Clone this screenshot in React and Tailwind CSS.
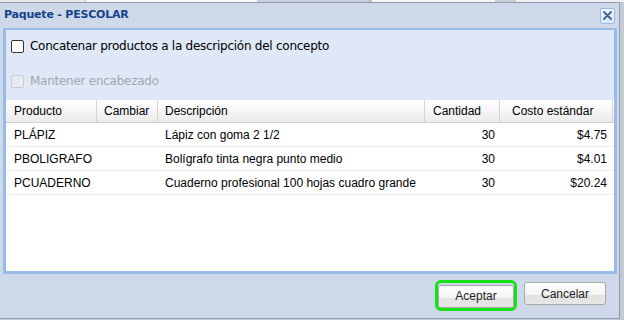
import React from "react";

const rows = [
  { producto: "PLÁPIZ", cambiar: "", descripcion: "Lápiz con goma 2 1/2", cantidad: 30, costo: "$4.75" },
  { producto: "PBOLIGRAFO", cambiar: "", descripcion: "Bolígrafo tinta negra punto medio", cantidad: 30, costo: "$4.01" },
  { producto: "PCUADERNO", cambiar: "", descripcion: "Cuaderno profesional 100 hojas cuadro grande", cantidad: 30, costo: "$20.24" },
];

// Checkbox
const Checkbox = ({ label, disabled }) => (
  <div className="flex items-center h-[22px]">
    <span
      className={
        disabled
          ? "w-[13px] h-[13px] rounded-[2px] border border-[#c8ccd2] bg-[#e6ebf3]"
          : "w-[13px] h-[13px] rounded-[2px] border border-[#333] bg-white"
      }
    />
    <span
      className={
        "ml-[6px] text-[12px] tracking-[-0.26px] font-['DejaVu_Sans',sans-serif] " +
        (disabled ? "text-[#a3a6ab]" : "text-black")
      }
    >
      {label}
    </span>
  </div>
);

// CloseButton
const CloseButton = () => (
  <div className="w-[15px] h-[16px] rounded-[2px] border border-[#99bbe8] bg-[linear-gradient(to_bottom,#f1f5fb,#dbe6f5)] flex items-center justify-center">
    <svg width="9" height="9" viewBox="0 0 9 9">
      <path d="M1 1 L8 8 M8 1 L1 8" stroke="#3d5f9b" strokeWidth="1.8" strokeLinecap="round" />
    </svg>
  </div>
);

// Button
const Button = ({ children, className = "" }) => (
  <button
    className={
      "h-[23px] rounded-[3px] border border-[#a9a9a9] bg-[linear-gradient(to_bottom,#fefefe_0%,#f4f4f4_55%,#e2e2e2_56%,#e6e6e6_100%)] text-[12px] text-[#222] font-['Liberation_Sans',sans-serif] " +
      className
    }
  >
    {children}
  </button>
);

export default function App() {
  return (
    <div className="w-[624px] h-[320px] overflow-hidden bg-[#c4cad2] font-['Liberation_Sans',sans-serif]">
      {/* page behind the dialog */}
      <div className="flex h-[2px]">
        <div className="w-[85px] bg-[#e9e9e9]" />
        <div className="w-[172px] bg-[#fbfbfb] border-l border-[#c8c8c8]" />
        <div className="w-[112px] bg-[#c9d0da]" />
        <div className="w-[126px] bg-[#f7f7f7] border-l-[3px] border-[#b8bec6]" />
        <div className="w-[21px] bg-[#c9ced6]" />
        <div className="flex-1 bg-[#eef0f3]" />
      </div>

      <div className="w-[620px] h-[317px] flex flex-col bg-[#cdd9e8] border-t border-r border-b border-[#8e9db2]">
        {/* title bar */}
        <div className="h-[25px] flex items-center justify-between pl-[4px] pr-[4px]">
          <span className="text-[11px] font-bold tracking-[-0.2px] text-[#15428b] font-['DejaVu_Sans',sans-serif]">
            Paquete - PESCOLAR
          </span>
          <CloseButton />
        </div>

        {/* body panel */}
        <div className="ml-[3px] mr-[2px] h-[246px] flex flex-col bg-[#dfe8f6] border-l-[3px] border-r-[3px] border-t-2 border-b-[3px] border-[#99bbe8]">
          <div className="h-[70px] pl-[5px] pt-[5px] flex flex-col gap-[13px]">
            <Checkbox label="Concatenar productos a la descripción del concepto" />
            <Checkbox label="Mantener encabezado" disabled />
          </div>

          <div className="flex-1 bg-white text-[12px] text-black">
            <div className="flex h-[23px] border-b border-[#d0d0d0] bg-[linear-gradient(to_bottom,#ffffff,#ebebeb)]">
              <div className="w-[91px] pl-[8px] flex items-center border-r border-[#d3d3d3]">Producto</div>
              <div className="w-[61px] pl-[7px] flex items-center border-r border-[#d3d3d3]">Cambiar</div>
              <div className="w-[267px] pl-[7px] flex items-center border-r border-[#d3d3d3]">Descripción</div>
              <div className="w-[75px] pl-[8px] flex items-center border-r border-[#d3d3d3]">Cantidad</div>
              <div className="w-[113px] pl-[12px] flex items-center border-r border-[#d3d3d3]">Costo estándar</div>
            </div>
            {rows.map((r, idx) => (
              <div key={idx} className="flex h-[24px] border-b border-[#ededed]">
                <div className="w-[91px] pl-[8px] flex items-center">{r.producto}</div>
                <div className="w-[61px] pl-[7px] flex items-center">{r.cambiar}</div>
                <div className="w-[267px] pl-[7px] flex items-center whitespace-nowrap">{r.descripcion}</div>
                <div className="w-[75px] pr-[5px] flex items-center justify-end">{r.cantidad}</div>
                <div className="w-[113px] pr-[6px] flex items-center justify-end">{r.costo}</div>
              </div>
            ))}
          </div>
        </div>

        {/* toolbar */}
        <div className="flex-1 flex items-start justify-end pt-[6px] pr-[13px] gap-[7px]">
          <div className="rounded-[6px] border-[3px] border-[#16e016]">
            <Button className="w-[76px]">Aceptar</Button>
          </div>
          <Button className="w-[82px] mt-[2px]">Cancelar</Button>
        </div>
      </div>
    </div>
  );
}
